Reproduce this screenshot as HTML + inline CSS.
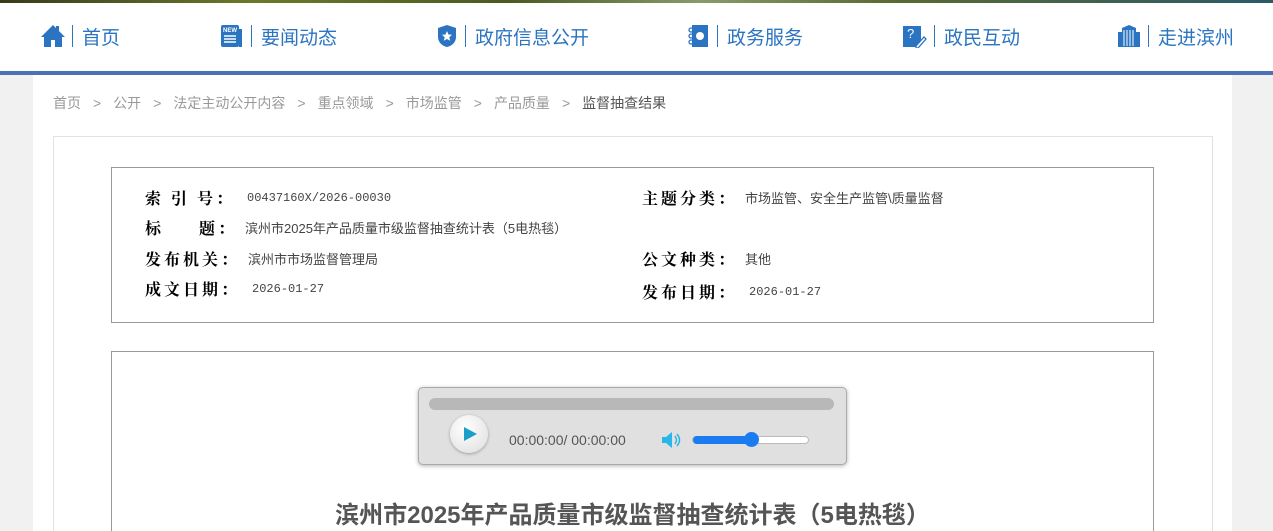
<!DOCTYPE html>
<html><head><meta charset="utf-8"><style>
*{margin:0;padding:0;box-sizing:border-box}
html,body{width:1273px;height:531px;overflow:hidden}
body{background:#f1f1f1;font-family:"Liberation Sans","Noto Sans CJK SC",sans-serif;position:relative}
.top{position:absolute;left:0;top:0;width:1273px;height:3px;background:linear-gradient(90deg,#3a3a1a,#6a7a2a 20%,#4a5a20 40%,#8a9a6a 55%,#5a6a30 70%,#2a5a6a 100%)}
.nav{position:absolute;left:0;top:3px;width:1273px;height:69px;background:#fff}
.bar{position:absolute;left:0;top:71px;width:1273px;height:4px;background:#4a72b4}
.ni{position:absolute;top:21px;height:24px;display:flex;align-items:center;color:#2a74c2;font-size:19px}
.ni svg{margin-right:7px}
.ni .sep{width:1px;height:22px;background:#2a74c2;margin-right:9px}
.main{position:absolute;left:33px;top:75px;width:1199px;height:456px;background:#fff;overflow:hidden}
.bc{position:absolute;left:20px;top:18px;font-size:14px;color:#999;white-space:nowrap}
.bc span{margin:0 12px}
.bc b{font-weight:normal;color:#555}
.outer{position:absolute;left:20px;top:61px;width:1160px;height:420px;border:1px solid #e2e2e2}
.info{position:absolute;left:78px;top:92px;width:1043px;height:156px;border:1px solid #999}
.r{position:absolute;font-size:13px;color:#444;white-space:nowrap;display:flex;align-items:center}
.r .l{font-weight:bold;color:#000;font-size:16px;letter-spacing:3px;margin-right:8px;font-family:"Noto Serif CJK SC","Liberation Serif",serif}
.mono{font-family:"Liberation Mono",monospace;font-size:12px;margin-left:4px}
.box2{position:absolute;left:78px;top:276px;width:1043px;height:200px;border:1px solid #999}
.player{position:absolute;left:385px;top:312px;width:429px;height:78px;background:#e0e0e0;border:1px solid #aaa;border-radius:5px;box-shadow:0 1px 4px rgba(0,0,0,.3)}
.prog{position:absolute;left:10px;top:10px;width:405px;height:12px;background:#b8b8b8;border-radius:6px}
.play{position:absolute;left:31px;top:27px;width:38px;height:38px;border-radius:50%;background:radial-gradient(circle at 40% 35%,#fff,#ddd);box-shadow:0 1px 3px rgba(0,0,0,.3)}
.play:after{content:"";position:absolute;left:14px;top:12px;border-left:13px solid #1aa0c8;border-top:7px solid transparent;border-bottom:7px solid transparent}
.time{position:absolute;left:90px;top:44px;font-size:14px;color:#555}
.vol{position:absolute;left:273px;top:48px;width:117px;height:8px;border:1px solid #bbb;border-radius:4px;background:#fff}
.vol i{position:absolute;left:0;top:-1px;width:60px;height:8px;background:#1a7cf0;border-radius:4px}
.vol b{position:absolute;left:51px;top:-5px;width:15px;height:15px;border-radius:50%;background:#1a7cf0}
h1{position:absolute;left:0;width:1199px;top:420px;text-align:center;font-size:24px;color:#555;font-weight:bold}
</style></head><body>
<div class="top"></div>
<div class="nav">
<div class="ni" style="left:41px"><svg width="24" height="24" viewBox="0 0 24 24"><path d="M12 1L0 13h3v10h7v-7h4v7h7V13h3L18 7V2h-3v2z" fill="#2a74c2"/></svg><span class="sep"></span>首页</div>
<div class="ni" style="left:220px"><svg width="24" height="24" viewBox="0 0 24 24"><rect x="1" y="1" width="18" height="22" rx="2" fill="#2a74c2"/><rect x="19" y="5" width="3" height="18" fill="#2a74c2"/><text x="3" y="8" font-size="6" fill="#fff" font-family="Liberation Sans" font-weight="bold">NEW</text><path d="M4 12h12M4 15h12M4 18h12" stroke="#fff" stroke-width="1.5"/></svg><span class="sep"></span>要闻动态</div>
<div class="ni" style="left:436px"><svg width="22" height="24" viewBox="0 0 22 24"><path d="M11 1l9 3v9c0 5-4 9-9 10C6 22 2 18 2 13V4z" fill="#2a74c2"/><path d="M11 7l1.5 3.5 3.5.3-2.7 2.4.9 3.6L11 15l-3.2 1.8.9-3.6L6 10.8l3.5-.3z" fill="#fff"/></svg><span class="sep"></span>政府信息公开</div>
<div class="ni" style="left:688px"><svg width="22" height="24" viewBox="0 0 22 24"><rect x="4" y="1" width="16" height="22" fill="#2a74c2"/><circle cx="3" cy="6" r="2" fill="none" stroke="#2a74c2" stroke-width="1.3"/><circle cx="3" cy="12" r="2" fill="none" stroke="#2a74c2" stroke-width="1.3"/><circle cx="3" cy="18" r="2" fill="none" stroke="#2a74c2" stroke-width="1.3"/><circle cx="12" cy="12" r="4" fill="#fff"/></svg><span class="sep"></span>政务服务</div>
<div class="ni" style="left:903px"><svg width="24" height="24" viewBox="0 0 24 24"><path d="M0 2h18v14l-5 7H0z" fill="#2a74c2"/><text x="4" y="14" font-size="13" fill="#fff" font-family="Liberation Sans">?</text><path d="M13 22l8-9 2 2-8 9h-2z" fill="none" stroke="#2a74c2" stroke-width="1.3"/></svg><span class="sep"></span>政民互动</div>
<div class="ni" style="left:1117px"><svg width="24" height="24" viewBox="0 0 24 24"><path d="M1 23V8h4V4l7-3 7 3v4h4v15z" fill="#2a74c2"/><path d="M7 6v16M10 6v16M13 6v16M16 6v16" stroke="#fff" stroke-width="1"/></svg><span class="sep"></span>走进滨州</div>
</div>
<div class="bar"></div>
<div class="main">
<div class="bc">首页<span>&gt;</span>公开<span>&gt;</span>法定主动公开内容<span>&gt;</span>重点领域<span>&gt;</span>市场监管<span>&gt;</span>产品质量<span>&gt;</span><b>监督抽查结果</b></div>
<div class="outer"></div>
<div class="info"></div>
<div class="r" style="left:112px;top:111px"><span class="l">索 引 号：</span><span class="mono">00437160X/2026-00030</span></div>
<div class="r" style="left:112px;top:141px"><span class="l">标&nbsp;&nbsp;&nbsp;&nbsp;&nbsp;题：</span>滨州市2025年产品质量市级监督抽查统计表（5电热毯）</div>
<div class="r" style="left:112px;top:172px"><span class="l">发布机关：</span>滨州市市场监督管理局</div>
<div class="r" style="left:112px;top:202px"><span class="l">成文日期：</span><span class="mono">2026-01-27</span></div>
<div class="r" style="left:609px;top:111px"><span class="l">主题分类：</span>市场监管、安全生产监管\质量监督</div>
<div class="r" style="left:609px;top:172px"><span class="l">公文种类：</span>其他</div>
<div class="r" style="left:609px;top:205px"><span class="l">发布日期：</span><span class="mono">2026-01-27</span></div>
<div class="box2"></div>
<div class="player"><div class="prog"></div><div class="play"></div><div class="time">00:00:00/ 00:00:00</div>
<svg style="position:absolute;left:243px;top:44px" width="20" height="16" viewBox="0 0 20 16"><path d="M0 5h4l6-5v16l-6-5H0z" fill="#29b6e8"/><path d="M13 4q3 4 0 8M15 2q5 6 0 12" fill="none" stroke="#29b6e8" stroke-width="1.5"/></svg>
<div class="vol"><i></i><b></b></div></div>
<h1>滨州市2025年产品质量市级监督抽查统计表（5电热毯）</h1>
</div>
</body></html>
